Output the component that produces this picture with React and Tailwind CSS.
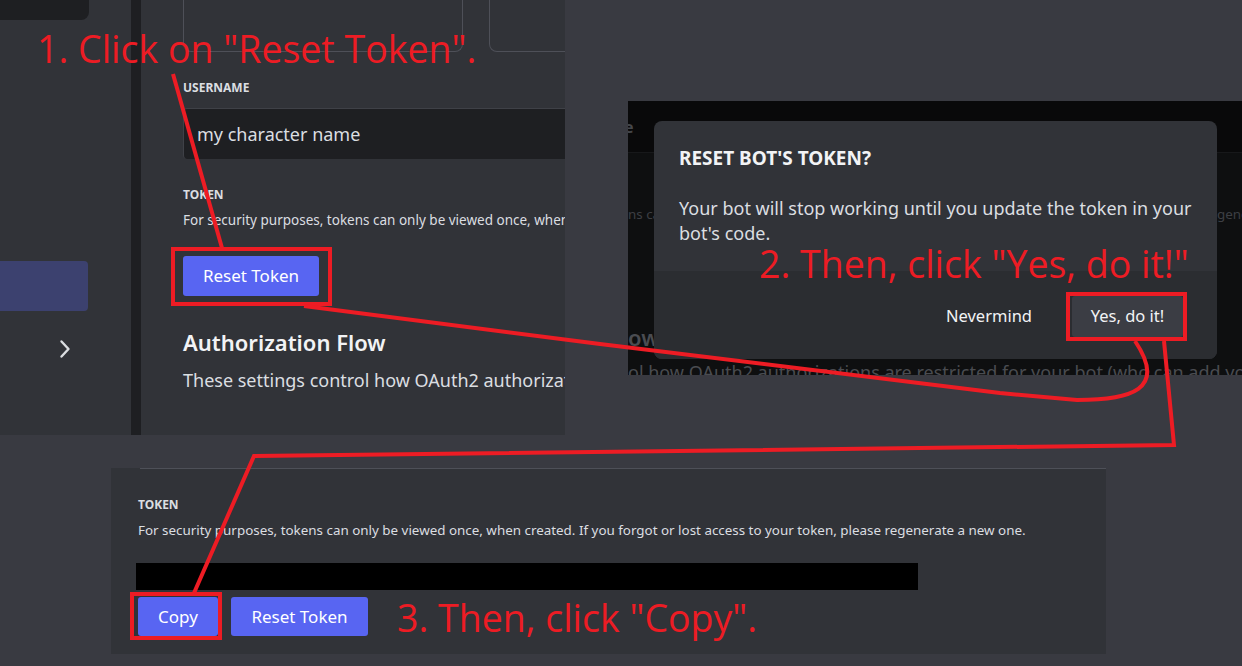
import React from "react";

// Collage of three Discord developer-portal crops with red step annotations on top.
const UI = "font-['Noto_Sans',sans-serif]";
const NOTE = "font-['Open_Sans',sans-serif] text-[#ed1c24] text-[37.5px] leading-none whitespace-nowrap";

function Chevron() {
  return (
    <svg width="12" height="20" viewBox="0 0 12 20" fill="none">
      <path d="M2.5 2.5 L9.5 10 L2.5 17.5" stroke="#dbdee1" strokeWidth="2.4" strokeLinecap="round" strokeLinejoin="round" />
    </svg>
  );
}

function SettingsCrop() {
  return (
    <div className={`absolute left-0 top-0 w-[565px] h-[435px] flex overflow-hidden bg-[#313338] ${UI}`}>
      {/* sidebar */}
      <div className="w-[131px] shrink-0 flex flex-col">
        <div className="w-[89px] h-[20px] rounded-br-[8px] bg-[#1e1f22]" />
        <div className="mt-[241px] w-[88px] h-[50px] rounded-r-[4px] bg-[#3c416f]" />
        <div className="mt-[28px] ml-[59px]">
          <Chevron />
        </div>
      </div>
      <div className="w-[10px] shrink-0 bg-[#1e1f22]" />
      {/* form */}
      <div className="flex-1 pl-[42px] flex flex-col">
        <div className="flex gap-[26px]">
          <div className="w-[280px] h-[52px] shrink-0 rounded-b-[8px] border-x border-b border-[#4e5058]" />
          <div className="w-[200px] h-[52px] shrink-0 rounded-b-[8px] border-x border-b border-[#4e5058]" />
        </div>
        <div className="mt-[28px] text-[12px] leading-[16px] font-bold text-[#dbdee1]">USERNAME</div>
        <div className="mt-[12px] w-[420px] h-[51px] shrink-0 flex items-center pl-[13px] bg-[#1e1f22] border-t border-l border-[#3f4147] rounded-l-[4px] text-[18px] text-[#dbdee1]">
          my character name
        </div>
        <div className="mt-[28px] text-[12px] leading-[16px] font-bold text-[#dbdee1]">TOKEN</div>
        <div className="mt-[9px] text-[13.5px] leading-[16px] text-[#dbdee1] whitespace-nowrap">
          For security purposes, tokens can only be viewed once, when created. If you forgot or lost access
        </div>
        <button className="mt-[28px] w-[136px] h-[40px] rounded-[3px] bg-[#5865f2] text-white text-[17px]">
          Reset Token
        </button>
        <div className="mt-[32px] text-[22px] leading-[28px] font-semibold text-[#f2f3f5] whitespace-nowrap">
          Authorization Flow
        </div>
        <div className="mt-[12px] text-[18px] leading-[24px] text-[#dbdee1] whitespace-nowrap">
          These settings control how OAuth2 authorizations are restricted for your bot
        </div>
      </div>
    </div>
  );
}

function ModalCrop() {
  return (
    <div className={`absolute left-[628px] top-[101px] w-[614px] h-[274px] overflow-hidden bg-[#0e0f10] ${UI}`}>
      <div className="h-[52px] bg-[#09090a] border-b border-[#17181a] flex items-center">
        <span className="text-[16px] font-bold text-[#45474c] -ml-[4px]">e</span>
      </div>
      <div className="mt-[53px] text-[13.4px] leading-[16px] text-[#3d3f44] whitespace-nowrap">
        ns can only be viewed once, when created. If you forgot or lost access to your token, please regenerate a new one.
      </div>
      <div className="mt-[101px] text-[22px] leading-[28px] font-semibold text-[#4a4c51] whitespace-nowrap">ow</div>
      <div className="mt-[9px] text-[18px] leading-[24px] text-[#4a4c51] whitespace-nowrap">
        ol how OAuth2 authorizations are restricted for your bot (who can add your bot
      </div>

      {/* dialog sits over the dimmed page */}
      <div className="absolute left-[26px] top-[20px] w-[563px] h-[238px] rounded-[8px] bg-[#313338] overflow-hidden flex flex-col">
        <div className="px-[25px] pt-[27px] h-[150px]">
          <div className="text-[19px] leading-[20px] font-bold text-[#f2f3f5]">RESET BOT'S TOKEN?</div>
          <div className="mt-[28px] text-[18px] leading-[25px] text-[#dbdee1]">
            Your bot will stop working until you update the token in your bot's code.
          </div>
        </div>
        <div className="flex-1 bg-[#2b2d31] flex items-start justify-end gap-[24px] pt-[25px] pr-[34px]">
          <button className="h-[41px] px-[16px] text-[16.5px] text-[#f2f3f5]">Nevermind</button>
          <button className="w-[111px] h-[41px] rounded-[3px] bg-[#3b3d44] text-[16.5px] text-[#f2f3f5]">Yes, do it!</button>
        </div>
      </div>
    </div>
  );
}

function TokenCrop() {
  return (
    <div className={`absolute left-[111px] top-[468px] w-[995px] h-[186px] bg-[#313338] ${UI}`}>
      <div className="ml-[29px] h-px bg-[#4e5058]" />
      <div className="pl-[27px] flex flex-col">
        <div className="mt-[28px] text-[12px] leading-[16px] font-bold text-[#dbdee1]">TOKEN</div>
        <div className="mt-[9px] text-[13.4px] leading-[16px] text-[#dbdee1] whitespace-nowrap">
          For security purposes, tokens can only be viewed once, when created. If you forgot or lost access to your token, please regenerate a new one.
        </div>
        <div className="mt-[25px] -ml-[2px] w-[782px] h-[27px] bg-black" />
        <div className="mt-[7px] flex gap-[13px]">
          <button className="w-[80px] h-[39px] rounded-[3px] bg-[#5865f2] text-white text-[17px]">Copy</button>
          <button className="w-[137px] h-[39px] rounded-[3px] bg-[#5865f2] text-white text-[17px]">Reset Token</button>
        </div>
      </div>
    </div>
  );
}

function Arrows() {
  const red = "#ed1c24";
  return (
    <svg className="absolute inset-0 pointer-events-none" width="1242" height="666" viewBox="0 0 1242 666" fill="none">
      <rect x="173" y="249" width="157" height="55" stroke={red} strokeWidth="4" />
      <rect x="1068" y="294" width="117" height="45" stroke={red} strokeWidth="4" />
      <rect x="132" y="594" width="88" height="44" stroke={red} strokeWidth="4" />
      <path d="M173 74 L222 248" stroke={red} strokeWidth="4" />
      <path d="M304 306 L600 344 L1000 393 L1077 400 C1130 400 1168 390 1135 341" stroke={red} strokeWidth="4" />
      <path d="M1164 341 L1174 445 L254 456 L194 593" stroke={red} strokeWidth="4" strokeLinejoin="miter" />
    </svg>
  );
}

export default function App() {
  return (
    <div className="relative w-[1242px] h-[666px] overflow-hidden bg-[#393a41]">
      <SettingsCrop />
      <ModalCrop />
      <TokenCrop />
      <Arrows />
      <div className={`absolute left-[37px] top-[30px] ${NOTE}`}>1. Click on "Reset Token".</div>
      <div className={`absolute left-[759px] top-[245px] ${NOTE}`}>2. Then, click "Yes, do it!"</div>
      <div className={`absolute left-[397px] top-[599px] ${NOTE}`}>3. Then, click "Copy".</div>
    </div>
  );
}
